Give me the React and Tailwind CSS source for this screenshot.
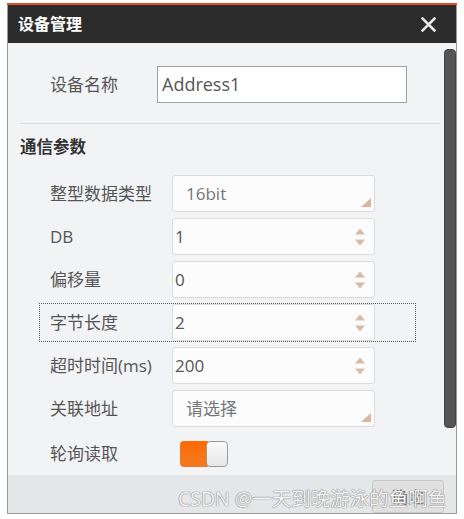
import React from "react";

const FONT = { fontFamily: '"Open Sans", "Noto Sans CJK SC", sans-serif' };

function Spinner() {
  return (
    <svg width="10" height="17" viewBox="0 0 10 17" className="absolute right-[9px] top-1/2 -translate-y-1/2">
      <path d="M5 0 L10 6 L0 6 Z" fill="#d6bba9" />
      <path d="M0 11 L10 11 L5 17 Z" fill="#d6bba9" />
    </svg>
  );
}

function Corner() {
  return (
    <svg width="10" height="9" viewBox="0 0 10 9" className="absolute right-[3px] bottom-[4px]">
      <path d="M10 0 L10 9 L0 9 Z" fill="#d8b6a2" />
    </svg>
  );
}

function Field({ value, kind }) {
  const isSelect = kind === "select";
  return (
    <div
      className={`relative w-[203px] h-[37px] rounded-[3px] border border-[#dcdcdc] bg-[#fcfcfc] flex items-center text-[17px] ${
        isSelect ? "pl-[13px] text-[#777]" : "pl-[2px] text-[#555]"
      }`}
    >
      {value}
      {isSelect ? <Corner /> : <Spinner />}
    </div>
  );
}

function Row({ label, value, kind, focused }) {
  return (
    <div
      className={`flex items-center h-[37px] w-[375px] ml-[32px] ${
        focused ? "outline outline-1 outline-dotted outline-[#555]" : ""
      }`}
    >
      <div className="w-[132px] pl-[10px] text-[17px] text-[#555] whitespace-nowrap">{label}</div>
      <Field value={value} kind={kind} />
    </div>
  );
}

export default function App() {
  return (
    <div className="w-[464px] h-[519px] bg-white relative overflow-hidden" style={FONT}>
      <div className="ml-[7px] mt-[3px] w-[450px] flex flex-col border-l border-r border-b border-[#9a9a9a]">
        <div className="h-[2px] bg-[#e0502e] -ml-px -mr-px" />
        <div className="h-[38px] bg-[#2c2c2c] flex items-center justify-between pl-[10px] pr-[20px]">
          <span className="text-white font-bold text-[16px]">设备管理</span>
          <svg width="15" height="15" viewBox="0 0 15 15">
            <path d="M1.5 1.5 L13.5 13.5 M13.5 1.5 L1.5 13.5" stroke="#e8e8e8" strokeWidth="2.6" strokeLinecap="square" />
          </svg>
        </div>
        <div className="h-[432px] bg-[#f2f3f5] flex">
          <div className="flex-1 flex flex-col">
            <div className="flex items-center mt-[23px]">
              <div className="w-[149px] pl-[42px] text-[17px] text-[#555]">设备名称</div>
              <div className="w-[250px] h-[37px] border border-[#a0a0a0] bg-white flex items-center pl-[4px] text-[18px] text-[#555]">
                Address1
              </div>
            </div>
            <div className="mt-[20px] ml-[12px] w-[420px] h-px bg-[#dcdde0]" />
            <div className="mt-[12px] ml-[12px] text-[16.5px] font-bold text-[#333] leading-[22px]">通信参数</div>
            <div className="mt-[17px] flex flex-col gap-[6px]">
              <Row label="整型数据类型" value="16bit" kind="select" />
              <Row label="DB" value="1" />
              <Row label="偏移量" value="0" />
              <Row label="字节长度" value="2" focused />
              <Row label="超时时间(ms)" value="200" />
              <Row label="关联地址" value="请选择" kind="select" />
            </div>
            <div className="flex items-center mt-[14px] h-[26px]">
              <div className="w-[172px] pl-[42px] text-[17px] text-[#555]">轮询读取</div>
              <div className="flex w-[48px] h-[26px] rounded-[4px] overflow-hidden">
                <div className="w-[28px] h-full bg-gradient-to-b from-[#ff6a00] to-[#f07a20]" />
                <div className="w-[22px] -ml-[2px] h-full rounded-[4px] border border-[#999] bg-gradient-to-b from-[#fafafa] to-[#e6e6e6]" />
              </div>
            </div>
          </div>
          <div className="w-[18px] pt-[6px] pl-[4px]">
            <div className="w-[12px] h-[379px] rounded-[4px] bg-[#555] border border-[#444]" />
          </div>
        </div>
        <div className="h-[38px] bg-[#e5e6e8] flex justify-end items-start pt-[5px] pr-[12px]">
          <div className="w-[72px] h-[33px] rounded-[3px] border border-[#c8c8c8] bg-[#e0e0e0] flex items-center justify-center text-[16px] text-[#777]">
            确定
          </div>
        </div>
      </div>
      <div className="absolute left-[178px] top-[484px] text-[19.5px] text-[#f4f4f4] whitespace-nowrap [text-shadow:0_0_1px_#777,0_0_1px_#777]">
        CSDN @一天到晚游泳的鱼啊鱼
      </div>
    </div>
  );
}
